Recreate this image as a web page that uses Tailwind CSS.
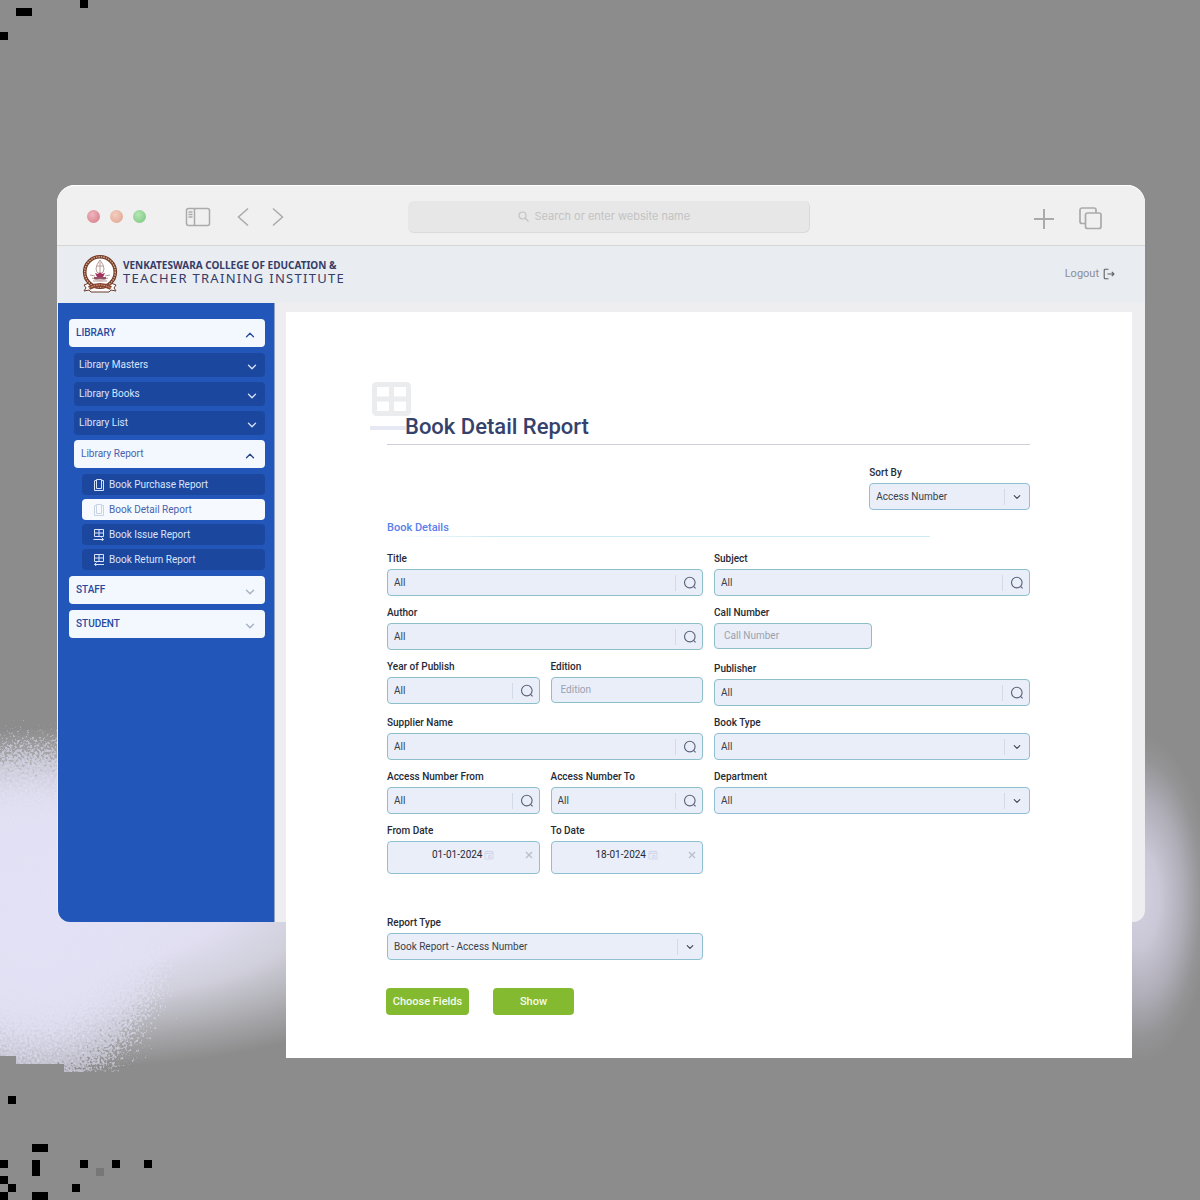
<!DOCTYPE html>
<html lang="en">
<head>
<meta charset="utf-8">
<meta name="viewport" content="width=device-width, initial-scale=1">
<title>Book Detail Report</title>
<script src="https://cdn.jsdelivr.net/npm/@tailwindcss/browser@4"></script>
</head>
<body class="relative min-h-screen overflow-x-hidden bg-[#8c8c8c] font-['Roboto',sans-serif] text-[10px] leading-4 text-[#3b3f4a]">

<!-- Shared icons -->
<svg class="hidden" aria-hidden="true">
  <symbol id="search" viewBox="0 0 14 14"><circle cx="6.8" cy="6.6" r="5.3" fill="none" stroke="currentColor" stroke-width="1.1"/><path d="M10.8 10.6l1.800 1.800" stroke="currentColor" stroke-width="1.1"/></symbol>
  <symbol id="down" viewBox="0 0 10 10"><path d="M1.5 3.2L5 6.7l3.500-3.500" fill="none" stroke="currentColor" stroke-width="1.300" stroke-linecap="round" stroke-linejoin="round"/></symbol>
  <symbol id="up" viewBox="0 0 10 10"><path d="M1.500 6.800L5 3.300l3.500 3.500" fill="none" stroke="currentColor" stroke-width="1.300" stroke-linecap="round" stroke-linejoin="round"/></symbol>
  <symbol id="book" viewBox="0 0 12 12"><path d="M3.500.5h5v9h-5zM1.500 1.500v10h9v-10M2 1.500h1M9 1.500h1.500" fill="none" stroke="currentColor" stroke-width="1"/></symbol>
  <symbol id="issue" viewBox="0 0 12 12"><path d="M1.500.5h9v7h-9zM6 .5v7M1.500 4h9M.5 10.500h10M8.500 8.500l2 2-2 1.500" fill="none" stroke="currentColor" stroke-width="1"/></symbol>
  <symbol id="return" viewBox="0 0 12 12"><path d="M1.500.5h9v7h-9zM6 .5v7M1.500 4h9M11 10.500H1.500M3.500 8.500l-2 2 2 1.500" fill="none" stroke="currentColor" stroke-width="1"/></symbol>
  <symbol id="calendar" viewBox="0 0 10 10"><path d="M1 1.500h8v7.500H1zM1 3.500h8M3 .5v2M7 .5v2M4.500 5.500h2.500v2H4.500z" fill="none" stroke="currentColor" stroke-width="1"/></symbol>
  <symbol id="cross" viewBox="0 0 8 8"><path d="M1 1l6 6M7 1L1 7" stroke="currentColor" stroke-width="1.400"/></symbol>
</svg>

<!-- Backdrop -->
<svg class="absolute top-0 left-0 h-[1200px] w-full" viewBox="0 0 1200 1200" preserveAspectRatio="none" aria-hidden="true">
  <defs>
    <radialGradient id="gl" gradientUnits="userSpaceOnUse" cx="0" cy="0" r="1" gradientTransform="translate(60 898) scale(430 170)">
      <stop offset="0" stop-color="#e3e1f5"/><stop offset=".4" stop-color="#e0def0"/><stop offset=".6" stop-color="#d0cfdb"/><stop offset=".8" stop-color="#adadb2"/><stop offset="1" stop-color="#8c8c8c"/>
    </radialGradient>
    <radialGradient id="gd" gradientUnits="userSpaceOnUse" cx="0" cy="0" r="1" gradientTransform="translate(30 920) scale(140 178)">
      <stop offset="0" stop-color="#e3e1f5"/><stop offset=".6" stop-color="#e3e1f5" stop-opacity=".9"/><stop offset=".92" stop-color="#e3e1f5" stop-opacity=".5"/><stop offset="1" stop-color="#e3e1f5" stop-opacity="0"/>
    </radialGradient>
    <radialGradient id="gr" gradientUnits="userSpaceOnUse" cx="0" cy="0" r="1" gradientTransform="translate(1138 898) scale(74 164)">
      <stop offset="0" stop-color="#d3d0e0"/><stop offset=".3" stop-color="#cac7d6"/><stop offset=".6" stop-color="#b0aeb8"/><stop offset=".85" stop-color="#949496"/><stop offset="1" stop-color="#8c8c8c"/>
    </radialGradient>
    <filter id="grain" x="-20%" y="-20%" width="140%" height="140%">
      <feTurbulence type="fractalNoise" baseFrequency=".4" numOctaves="2" seed="4"/>
      <feDisplacementMap in="SourceGraphic" scale="90" xChannelSelector="R" yChannelSelector="G"/>
    </filter>
    <clipPath id="floor"><path d="M0 700H300V1066H120V1072H64V1064H16V1056H0z"/></clipPath>
  </defs>
  <rect width="1200" height="1200" fill="#8c8c8c"/>
  <g clip-path="url(#floor)">
    <rect y="700" width="300" height="380" fill="url(#gl)"/>
    <ellipse cx="30" cy="920" rx="140" ry="178" fill="url(#gd)" filter="url(#grain)"/>
  </g>
  <rect x="1130" y="700" width="70" height="400" fill="url(#gr)"/>
  <path d="M80 0h8v8h-8zM16 8h16v8H16zM0 32h8v8H0zM8 1096h8v8H8zM32 1144h16v8H32zM0 1160h8v8H0zM32 1160h8v16h-8zM80 1160h8v8h-8zM112 1160h8v8h-8zM144 1160h8v8h-8zM0 1176h8v8H0zM8 1184h8v8H8zM72 1184h8v8h-8zM0 1192h8v8H0zM32 1192h16v8H32z"/>
  <path d="M96 1168h8v8h-8z" fill="#777"/>
</svg>

<div class="relative pt-[185px] pr-[55px] pb-[272px] pl-[57px]">
  <div class="rounded-t-[18px] rounded-b-xl bg-[#eeeef0]">

    <!-- Browser toolbar -->
    <div class="flex h-[61px] items-center rounded-t-[18px] border-t border-b border-t-white border-b-[#d6d6d2] bg-[#f0f0f0] pt-[2px] pr-[43px] pl-[30px] text-[#aaa]">
      <div class="flex gap-[10px]">
        <span class="size-[13px] rounded-full bg-radial-[at_40%_35%] from-[#efb5bd] to-[#d27883]"></span>
        <span class="size-[13px] rounded-full bg-radial-[at_40%_35%] from-[#f3cfc0] to-[#dfa08c]"></span>
        <span class="size-[13px] rounded-full bg-radial-[at_40%_35%] from-[#b5e6b5] to-[#74c57c]"></span>
      </div>
      <button class="ml-[39px]" aria-label="Sidebar"><svg class="h-5 w-[26px]" viewBox="0 0 26 20" fill="none" stroke="currentColor" stroke-width="1.500"><rect x="1.500" y="1.500" width="23" height="17" rx="2"/><path d="M9.500 1.500v17M3.500 5h4M3.500 7.500h4M3.500 10h4"/></svg></button>
      <button class="ml-[26px]" aria-label="Back"><svg class="h-5 w-3" viewBox="0 0 12 20" fill="none" stroke="currentColor" stroke-width="1.500"><path d="M11 1.500L1.500 10l9.500 8.500"/></svg></button>
      <button class="ml-[23px]" aria-label="Forward"><svg class="h-5 w-3" viewBox="0 0 12 20" fill="none" stroke="currentColor" stroke-width="1.500"><path d="M1 1.500l9.500 8.500L1 18.500"/></svg></button>
      <label class="mr-[223px] ml-[124px] flex h-8 flex-1 items-center justify-center gap-[6px] rounded-md border-r border-b border-[#dadada] bg-[#e7e7e7] text-[#c3c3c3]">
        <svg class="size-[11px]" viewBox="0 0 11 11" fill="none" stroke="currentColor" stroke-width="1.200"><circle cx="4.500" cy="4.500" r="3.500"/><path d="M7 7l3.500 3.500"/></svg>
        <input class="w-[165px] bg-transparent font-['Inter',sans-serif] text-[11px] outline-none placeholder:text-[#c3c3c3]" aria-label="Address" placeholder="Search or enter website name">
      </label>
      <button aria-label="New tab"><svg class="mt-1 size-[22px]" viewBox="0 0 22 22" stroke="currentColor" stroke-width="2"><path d="M11 1v20M1 11h20"/></svg></button>
      <button class="ml-6" aria-label="Tabs"><svg class="mt-1 size-[23px]" viewBox="0 0 23 23" fill="none" stroke="currentColor" stroke-width="1.700"><path d="M6 16.500H3a2 2 0 0 1-2-2V3a2 2 0 0 1 2-2h12a2 2 0 0 1 2 2v3"/><rect x="6.500" y="6" width="15.500" height="15.500" rx="2"/></svg></button>
    </div>

    <!-- Site header -->
    <header class="flex h-[57px] items-center bg-[#e9ecf1] pr-[30px] pb-[2px] pl-6">
      <svg class="h-[40px] w-[38px]" viewBox="0 0 38 40" aria-hidden="true">
        <path d="M3 31l5-2 22 0 5 2-2 3 2 3-5-1-2 2H10l-2-2-5 1 2-3z" fill="#fff" stroke="#6b3a2c" stroke-width="1"/>
        <circle cx="19" cy="18" r="15.300" fill="#fff" stroke="#703a28" stroke-width="3.600"/>
        <circle cx="19" cy="18" r="15.300" fill="none" stroke="#d9a98c" stroke-width="1.400" stroke-dasharray="1.500 1"/>
        <path d="M8 34q11-6 22 0" fill="none" stroke="#8b4630" stroke-width="4"/>
        <path d="M8 34q11-6 22 0" fill="none" stroke="#d9a98c" stroke-width="1" stroke-dasharray="1.500 1"/>
        <path d="M19 6q-4 5-4 9t4 5q4-1 4-5t-4-9M19 8v10M16 12h6M11 24q8 4 16 0M12 27h14M9 21l5 1M29 21l-5 1" fill="none" stroke="#b89a94" stroke-width="1"/>
        <path d="M14 19l3 1 2-2 2 2 3-1-2 4h-6z" fill="#a3305e"/><path d="M13 23h12v2H13z" fill="#93506a"/>
      </svg>
      <div class="ml-1 flex flex-col pb-1 font-['Noto_Sans',sans-serif] leading-[13px] text-[#353c68]">
        <span class="text-[10px] font-bold">VENKATESWARA COLLEGE OF EDUCATION &amp;</span>
        <span class="text-[13px] tracking-widest">TEACHER TRAINING INSTITUTE</span>
      </div>
      <a href="#" class="ml-auto flex items-center gap-1 text-[11px] text-[#8b8e95]">Logout
        <svg class="size-3" viewBox="0 0 12 12" fill="none" stroke="#5d6068" stroke-width="1.100"><path d="M5.500 1.200H2.200a1 1 0 0 0-1 1v7.600a1 1 0 0 0 1 1h3.300M4.500 6h6.500M8.800 3.800L11 6 8.800 8.200"/></svg>
      </a>
    </header>

    <div class="flex items-stretch">
      <!-- Navigation -->
      <nav class="ml-px flex w-[217px] shrink-0 flex-col gap-[6px] rounded-bl-xl border-r border-[#8fa3c4] bg-[#2257b9] pt-4 pr-[9px] pl-[11px]">
        <button class="flex h-7 items-center justify-between rounded bg-[#f3f7fe] pr-[10px] pl-[7px] text-[#274a9e]"><span class="font-medium">LIBRARY</span><svg class="mt-[3px] size-[10px]"><use href="#up"/></svg></button>
        <div class="flex flex-col gap-[5px] pl-[5px] text-[#d8e4fb]">
          <button class="flex h-6 items-center justify-between rounded bg-[#1c479f] pr-2 pl-[5px]">Library Masters<svg class="mt-[3px] size-[10px]"><use href="#down"/></svg></button>
          <button class="flex h-6 items-center justify-between rounded bg-[#1c479f] pr-2 pl-[5px]">Library Books<svg class="mt-[3px] size-[10px]"><use href="#down"/></svg></button>
          <button class="flex h-6 items-center justify-between rounded bg-[#1c479f] pr-2 pl-[5px]">Library List<svg class="mt-[3px] size-[10px]"><use href="#down"/></svg></button>
          <button class="flex h-7 items-center justify-between rounded bg-[#f3f7fe] pr-[10px] pl-[7px] text-[#4a62ac]">Library Report<svg class="mt-[3px] size-[10px] text-[#27407f]"><use href="#up"/></svg></button>
          <div class="flex flex-col gap-1 pt-px pl-2">
            <a href="#" class="flex h-[21px] items-center gap-1 rounded bg-[#1c479f] pl-[11px]"><svg class="size-3"><use href="#book"/></svg>Book Purchase Report</a>
            <a href="#" class="flex h-[21px] items-center gap-1 rounded bg-[#f6faff] pl-[11px] text-[#4a62ac]"><svg class="size-3 text-[#c9d3e4]"><use href="#book"/></svg>Book Detail Report</a>
            <a href="#" class="flex h-[21px] items-center gap-1 rounded bg-[#1c479f] pl-[11px]"><svg class="size-3"><use href="#issue"/></svg>Book Issue Report</a>
            <a href="#" class="flex h-[21px] items-center gap-1 rounded bg-[#1c479f] pl-[11px]"><svg class="size-3"><use href="#return"/></svg>Book Return Report</a>
          </div>
        </div>
        <button class="flex h-7 items-center justify-between rounded bg-[#f3f7fe] pr-[10px] pl-[7px] text-[#274a9e]"><span class="font-medium">STAFF</span><svg class="mt-[3px] size-[10px] text-[#a3afc4]"><use href="#down"/></svg></button>
        <button class="flex h-7 items-center justify-between rounded bg-[#f3f7fe] pr-[10px] pl-[7px] text-[#274a9e]"><span class="font-medium">STUDENT</span><svg class="mt-[3px] size-[10px] text-[#a3afc4]"><use href="#down"/></svg></button>
      </nav>

      <!-- Report form -->
      <main class="mt-[9px] mr-[13px] -mb-[136px] ml-[11px] min-w-0 flex-1 bg-white pt-[70px] pr-[102px] pb-[43px] pl-[101px]">
        <div class="-ml-[17px] grid h-[62px] items-end">
          <svg class="col-start-1 row-start-1 h-[50px] w-[41px] self-start" viewBox="0 0 41 50" aria-hidden="true"><rect x="4.500" y="2.500" width="34" height="29" rx="2" fill="none" stroke="#eaeced" stroke-width="5"/><path d="M21.500 2v30M4 17h35" stroke="#eaeced" stroke-width="5"/><path d="M0 46h36" stroke="#e6e9f4" stroke-width="4"/></svg>
          <h1 class="col-start-1 row-start-1 pb-[3px] pl-[35px] text-[22px] leading-7 font-medium text-[#35426b]">Book Detail Report</h1>
        </div>
        <hr class="border-[#cdd0d8]">
        <div class="mt-5 ml-auto w-1/4">
          <label for="sort" class="mb-[2px] block font-medium text-[#262a36]">Sort By</label>
          <div class="flex h-[27px] items-center rounded border border-[#8fbfd3] bg-[#e9eef8]">
            <select id="sort" class="min-w-0 flex-1 appearance-none bg-transparent pl-[6px] outline-none"><option>Access Number</option></select>
            <span class="h-4 w-px bg-[#d3dae8]"></span><svg class="mx-2 size-2"><use href="#down"/></svg>
          </div>
        </div>

        <h2 class="mt-[10px] text-[11px] font-medium text-[#5a80ea]">Book Details</h2>
        <div class="mr-[100px] h-px bg-linear-to-r from-white via-[#cdeaf3] via-20% to-[#cdeaf3]"></div>

        <form class="mt-[14px]">
          <div class="grid grid-cols-4 gap-x-[11px] gap-y-[9px]">
            <div class="col-span-2">
              <label for="title" class="mb-[2px] block font-medium text-[#262a36]">Title</label>
              <div class="flex h-[27px] items-center rounded border border-[#8cbfc9] bg-[#e9eef8]"><input id="title" value="All" class="min-w-0 flex-1 bg-transparent pl-[6px] outline-none"><span class="h-4 w-px bg-[#d3dae8]"></span><button type="button" class="mr-[5px] ml-[7px]" aria-label="Find title"><svg class="size-[14px] text-[#596178]"><use href="#search"/></svg></button></div>
            </div>
            <div class="col-span-2">
              <label for="subject" class="mb-[2px] block font-medium text-[#262a36]">Subject</label>
              <div class="flex h-[27px] items-center rounded border border-[#8cbfc9] bg-[#e9eef8]"><input id="subject" value="All" class="min-w-0 flex-1 bg-transparent pl-[6px] outline-none"><span class="h-4 w-px bg-[#d3dae8]"></span><button type="button" class="mr-[5px] ml-[7px]" aria-label="Find subject"><svg class="size-[14px] text-[#596178]"><use href="#search"/></svg></button></div>
            </div>

            <div class="col-span-2">
              <label for="author" class="mb-[2px] block font-medium text-[#262a36]">Author</label>
              <div class="flex h-[27px] items-center rounded border border-[#8cbfc9] bg-[#e9eef8]"><input id="author" value="All" class="min-w-0 flex-1 bg-transparent pl-[6px] outline-none"><span class="h-4 w-px bg-[#d3dae8]"></span><button type="button" class="mr-[5px] ml-[7px]" aria-label="Find author"><svg class="size-[14px] text-[#596178]"><use href="#search"/></svg></button></div>
            </div>
            <div class="col-span-2">
              <label for="call" class="mb-[2px] block font-medium text-[#262a36]">Call Number</label>
              <input id="call" placeholder="Call Number" class="block h-[26px] w-1/2 rounded-sm border border-[#8cbfc9] bg-[#e9eef8] px-[9px] pb-[2px] outline-none placeholder:text-[#9aa1b0]">
            </div>

            <div>
              <label for="year" class="mb-[2px] block font-medium text-[#262a36]">Year of Publish</label>
              <div class="flex h-[27px] items-center rounded border border-[#8cbfc9] bg-[#e9eef8]"><input id="year" value="All" class="min-w-0 flex-1 bg-transparent pl-[6px] outline-none"><span class="h-4 w-px bg-[#d3dae8]"></span><button type="button" class="mr-[5px] ml-[7px]" aria-label="Find year"><svg class="size-[14px] text-[#596178]"><use href="#search"/></svg></button></div>
            </div>
            <div>
              <label for="edition" class="mb-[2px] block font-medium text-[#262a36]">Edition</label>
              <input id="edition" placeholder="Edition" class="block h-[26px] w-full rounded-sm border border-[#8cbfc9] bg-[#e9eef8] px-[9px] pb-[2px] outline-none placeholder:text-[#9aa1b0]">
            </div>
            <div class="col-span-2 pt-[2px]">
              <label for="publisher" class="mb-[2px] block font-medium text-[#262a36]">Publisher</label>
              <div class="flex h-[27px] items-center rounded border border-[#8cbfc9] bg-[#e9eef8]"><input id="publisher" value="All" class="min-w-0 flex-1 bg-transparent pl-[6px] outline-none"><span class="h-4 w-px bg-[#d3dae8]"></span><button type="button" class="mr-[5px] ml-[7px]" aria-label="Find publisher"><svg class="size-[14px] text-[#596178]"><use href="#search"/></svg></button></div>
            </div>

            <div class="col-span-2">
              <label for="supplier" class="mb-[2px] block font-medium text-[#262a36]">Supplier Name</label>
              <div class="flex h-[27px] items-center rounded border border-[#8cbfc9] bg-[#e9eef8]"><input id="supplier" value="All" class="min-w-0 flex-1 bg-transparent pl-[6px] outline-none"><span class="h-4 w-px bg-[#d3dae8]"></span><button type="button" class="mr-[5px] ml-[7px]" aria-label="Find supplier"><svg class="size-[14px] text-[#596178]"><use href="#search"/></svg></button></div>
            </div>
            <div class="col-span-2">
              <label for="type" class="mb-[2px] block font-medium text-[#262a36]">Book Type</label>
              <div class="flex h-[27px] items-center rounded border border-[#8fbfd3] bg-[#e9eef8]">
                <select id="type" class="min-w-0 flex-1 appearance-none bg-transparent pl-[6px] outline-none"><option>All</option></select>
                <span class="h-4 w-px bg-[#d3dae8]"></span><svg class="mx-2 size-2"><use href="#down"/></svg>
              </div>
            </div>

            <div>
              <label for="from-number" class="mb-[2px] block font-medium text-[#262a36]">Access Number From</label>
              <div class="flex h-[27px] items-center rounded border border-[#8cbfc9] bg-[#e9eef8]"><input id="from-number" value="All" class="min-w-0 flex-1 bg-transparent pl-[6px] outline-none"><span class="h-4 w-px bg-[#d3dae8]"></span><button type="button" class="mr-[5px] ml-[7px]" aria-label="Find first number"><svg class="size-[14px] text-[#596178]"><use href="#search"/></svg></button></div>
            </div>
            <div>
              <label for="to-number" class="mb-[2px] block font-medium text-[#262a36]">Access Number To</label>
              <div class="flex h-[27px] items-center rounded border border-[#8cbfc9] bg-[#e9eef8]"><input id="to-number" value="All" class="min-w-0 flex-1 bg-transparent pl-[6px] outline-none"><span class="h-4 w-px bg-[#d3dae8]"></span><button type="button" class="mr-[5px] ml-[7px]" aria-label="Find last number"><svg class="size-[14px] text-[#596178]"><use href="#search"/></svg></button></div>
            </div>
            <div class="col-span-2">
              <label for="department" class="mb-[2px] block font-medium text-[#262a36]">Department</label>
              <div class="flex h-[27px] items-center rounded border border-[#8fbfd3] bg-[#e9eef8]">
                <select id="department" class="min-w-0 flex-1 appearance-none bg-transparent pl-[6px] outline-none"><option>All</option></select>
                <span class="h-4 w-px bg-[#d3dae8]"></span><svg class="mx-2 size-2"><use href="#down"/></svg>
              </div>
            </div>

            <div>
              <label for="from-date" class="mb-[2px] block font-medium text-[#262a36]">From Date</label>
              <div class="flex h-[33px] items-center rounded-sm border border-[#8fbfd3] bg-[#e9eef8] pr-[6px] pb-[6px] pl-11">
                <input id="from-date" value="01-01-2024" class="w-[52px] bg-transparent text-[#262a36] outline-none">
                <svg class="size-[10px] text-[#d3d6ea]"><use href="#calendar"/></svg>
                <button type="button" class="ml-auto" aria-label="Clear from date"><svg class="size-2 text-[#b9bfcb]"><use href="#cross"/></svg></button>
              </div>
            </div>
            <div>
              <label for="to-date" class="mb-[2px] block font-medium text-[#262a36]">To Date</label>
              <div class="flex h-[33px] items-center rounded-sm border border-[#8fbfd3] bg-[#e9eef8] pr-[6px] pb-[6px] pl-11">
                <input id="to-date" value="18-01-2024" class="w-[52px] bg-transparent text-[#262a36] outline-none">
                <svg class="size-[10px] text-[#d3d6ea]"><use href="#calendar"/></svg>
                <button type="button" class="ml-auto" aria-label="Clear to date"><svg class="size-2 text-[#b9bfcb]"><use href="#cross"/></svg></button>
              </div>
            </div>

            <div class="col-span-2 col-start-1 mt-8">
              <label for="report" class="mb-[2px] block font-medium text-[#262a36]">Report Type</label>
              <div class="flex h-[27px] items-center rounded border border-[#8fbfd3] bg-[#e9eef8]">
                <select id="report" class="min-w-0 flex-1 appearance-none bg-transparent pl-[6px] outline-none"><option>Book Report - Access Number</option></select>
                <span class="h-4 w-px bg-[#d3dae8]"></span><svg class="mx-2 size-2"><use href="#down"/></svg>
              </div>
            </div>
          </div>
          <div class="mt-7 -ml-px flex gap-6 text-[11px] font-medium text-[#f4faea]">
            <button type="button" class="h-[27px] w-[83px] rounded-sm bg-[#84ba30]">Choose Fields</button>
            <button type="button" class="h-[27px] w-[81px] rounded-sm bg-[#84ba30]">Show</button>
          </div>
        </form>
      </main>
    </div>
  </div>
</div>
</body>
</html>
